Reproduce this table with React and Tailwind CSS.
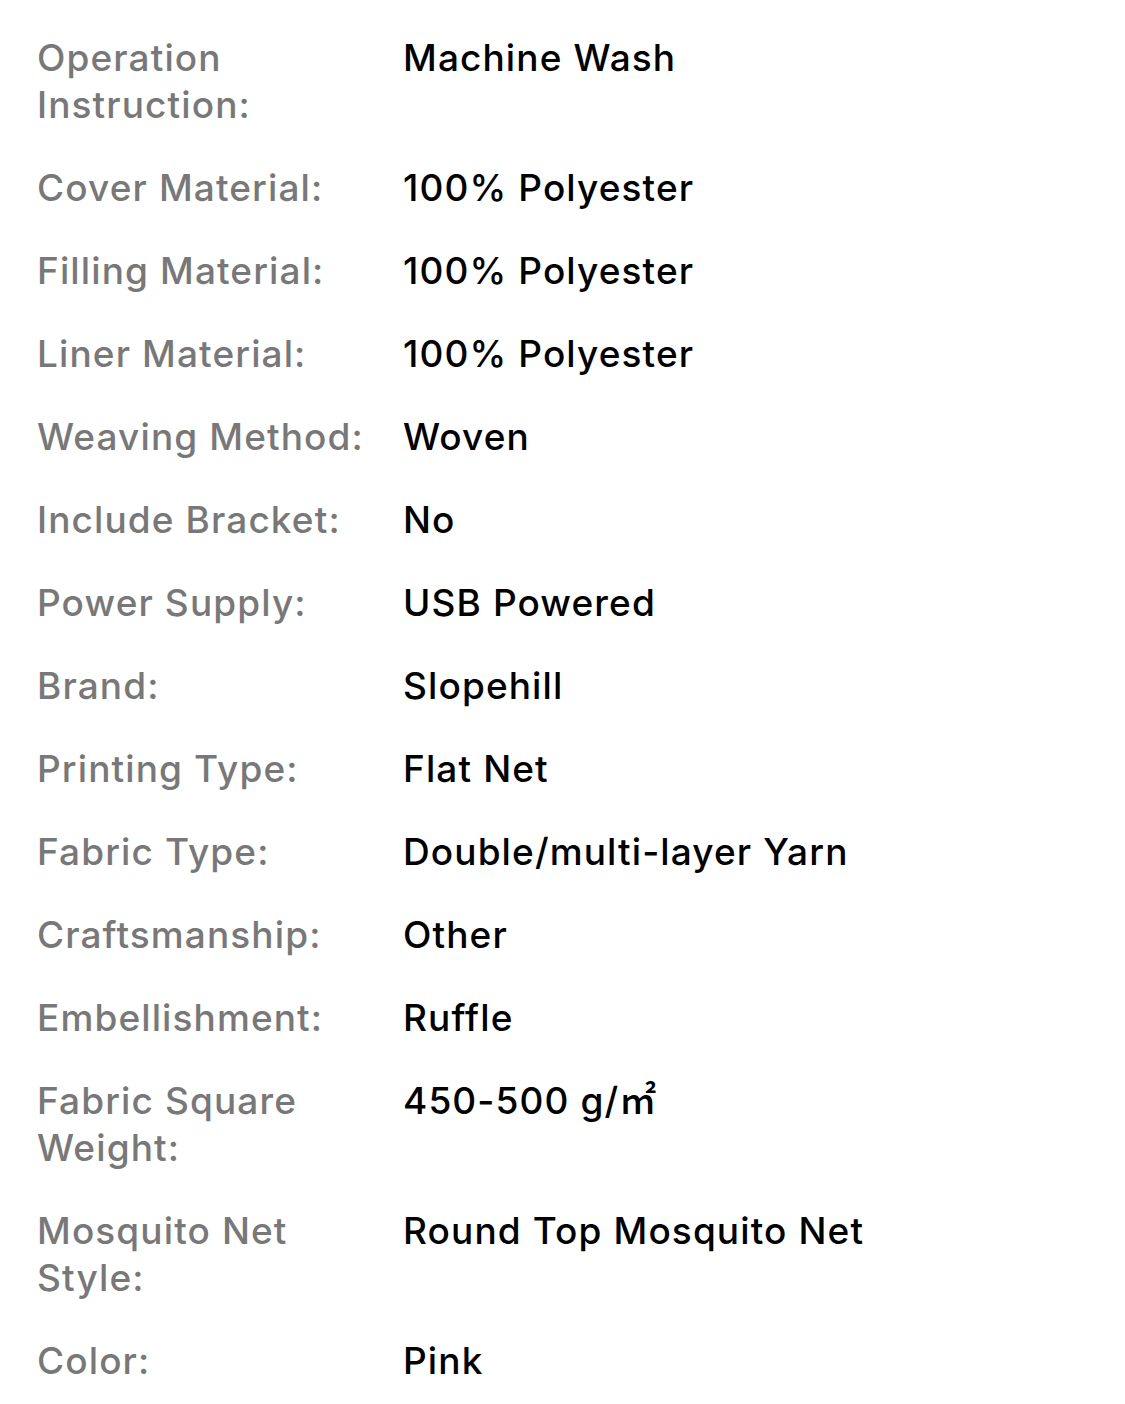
const specs = [
  { label: ['Operation', 'Instruction:'], value: 'Machine Wash' },
  { label: ['Cover Material:'], value: '100% Polyester' },
  { label: ['Filling Material:'], value: '100% Polyester' },
  { label: ['Liner Material:'], value: '100% Polyester' },
  { label: ['Weaving Method:'], value: 'Woven' },
  { label: ['Include Bracket:'], value: 'No' },
  { label: ['Power Supply:'], value: 'USB Powered' },
  { label: ['Brand:'], value: 'Slopehill' },
  { label: ['Printing Type:'], value: 'Flat Net' },
  { label: ['Fabric Type:'], value: 'Double/multi-layer Yarn' },
  { label: ['Craftsmanship:'], value: 'Other' },
  { label: ['Embellishment:'], value: 'Ruffle' },
  { label: ['Fabric Square', 'Weight:'], value: '450-500 g/㎡' },
  { label: ['Mosquito Net', 'Style:'], value: 'Round Top Mosquito Net' },
  { label: ['Color:'], value: 'Pink' },
];

export default function App() {
  return (
    <div className="min-h-screen bg-white pl-[37px] pr-6 pt-[34px] font-['Inter','Noto_Sans_CJK_SC',sans-serif] text-[37px] leading-[47px] font-[550] tracking-[0.03em]">
      <div className="grid grid-cols-[366px_1fr] gap-y-9">
        {specs.map((s, i) => (
          <div key={i} className="contents">
            <div className="text-[#787878] whitespace-nowrap">
              {s.label.map((l, j) => (
                <div key={j}>{l}</div>
              ))}
            </div>
            <div className="text-black whitespace-nowrap">{s.value}</div>
          </div>
        ))}
      </div>
    </div>
  );
}
